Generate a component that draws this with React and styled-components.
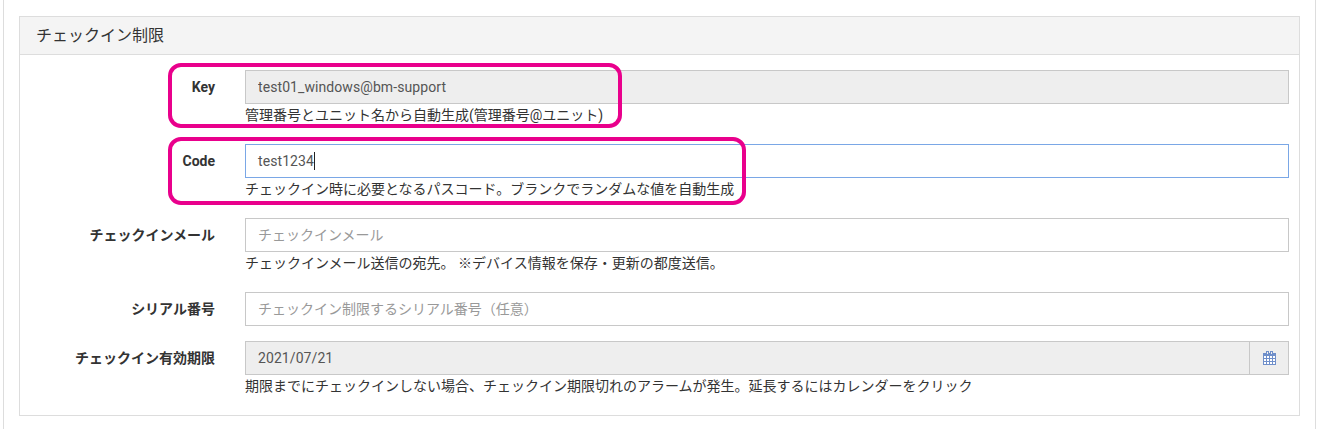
import React from "react";
import styled, { createGlobalStyle } from "styled-components";

const GlobalStyle = createGlobalStyle`
  html, body {
    margin: 0;
    padding: 0;
    background: #fff;
  }
  body {
    font-family: Roboto, "Noto Sans CJK JP", sans-serif;
    font-size: 14px;
    color: #333;
  }
`;

const Page = styled.div`
  position: relative;
  box-sizing: border-box;
  width: 1313px;
  height: 429px;
  margin-left: 3px;
  padding: 16px 15px 0 15px;
  border-left: 1px solid #ddd;
  border-right: 1px solid #ddd;
  overflow: hidden;
`;

const Panel = styled.section`
  box-sizing: border-box;
  height: 400px;
  border: 1px solid #ddd;
`;

const PanelHeading = styled.h3`
  box-sizing: border-box;
  height: 38px;
  margin: 0;
  padding: 0 16px;
  background: #f4f4f4;
  border-bottom: 1px solid #ddd;
  font-size: 16px;
  font-weight: 400;
  line-height: 38px;
  color: #333;
`;

const PanelBody = styled.div`
  padding: 15px 10px 0 0;
`;

const FormRow = styled.div`
  display: grid;
  grid-template-columns: 195px 1fr;
  column-gap: 30px;
  margin-bottom: 15px;
`;

const Label = styled.label`
  padding-top: 7px;
  font-weight: 700;
  line-height: 20px;
  text-align: right;
  color: #333;
`;

const InputGroup = styled.div`
  display: flex;
`;

const Input = styled.input`
  display: block;
  box-sizing: border-box;
  flex: 1;
  width: 100%;
  min-width: 0;
  height: 34px;
  padding: 6px 12px;
  border: 1px solid ${(p) => (p.$focused ? "#7aa7e6" : "#c8c8c8")};
  background: ${(p) => (p.disabled ? "#eee" : "#fff")};
  font-family: inherit;
  font-size: 14px;
  letter-spacing: 0.08px;
  line-height: 20px;
  color: #555;
  opacity: 1;
  outline: none;

  &::placeholder {
    color: #999;
    letter-spacing: 0;
    opacity: 1;
  }
`;

const Caret = styled.span`
  display: inline-block;
  width: 1px;
  height: 18px;
  background: #222;
  vertical-align: -4px;
`;

const CalendarAddon = styled.span`
  display: flex;
  align-items: center;
  justify-content: center;
  box-sizing: border-box;
  width: 39px;
  height: 34px;
  border: 1px solid #c8c8c8;
  border-left: 0;
  background: #eee;
  color: #6f8fca;
`;

const HelpText = styled.p`
  margin: 1px 0 4px;
  line-height: 20px;
  color: #333;
`;

const Callout = styled.div`
  position: absolute;
  box-sizing: border-box;
  left: ${(p) => p.$left}px;
  top: ${(p) => p.$top}px;
  width: ${(p) => p.$width}px;
  height: ${(p) => p.$height}px;
  border: 4px solid #e9008c;
  border-radius: 13px;
  pointer-events: none;
`;

function CalendarIcon() {
  return (
    <svg width="13" height="14" viewBox="0 0 13 14" aria-hidden="true">
      <rect x="1" y="5" width="11" height="8" fill="#fff" />
      <path
        fill="currentColor"
        fillRule="evenodd"
        d="M3 0h3v2h1V0h3v2h3v12H0V2h3V0zM4 1v2h1V1H4zm4 0v2h1V1H8zM1 5v2h2V5H1zm3 0v2h2V5H4zm3 0v2h2V5H7zm3 0v2h2V5h-2zM1 8v2h2V8H1zm3 0v2h2V8H4zm3 0v2h2V8H7zm3 0v2h2V8h-2zM1 11v2h2v-2H1zm3 0v2h2v-2H4zm3 0v2h2v-2H7zm3 0v2h2v-2h-2z"
      />
      <path fill="#eee" d="M4 1h1v1.5H4zM8 1h1v1.5H8z" />
    </svg>
  );
}

export default function App() {
  return (
    <>
      <GlobalStyle />
      <Page>
        <Panel>
          <PanelHeading>チェックイン制限</PanelHeading>
          <PanelBody>
            <FormRow>
              <Label>Key</Label>
              <div>
                <Input disabled value="test01_windows@bm-support" readOnly />
                <HelpText>管理番号とユニット名から自動生成(管理番号@ユニット)</HelpText>
              </div>
            </FormRow>
            <FormRow>
              <Label>Code</Label>
              <div>
                <Input as="div" $focused>
                  test1234
                  <Caret />
                </Input>
                <HelpText>チェックイン時に必要となるパスコード。ブランクでランダムな値を自動生成</HelpText>
              </div>
            </FormRow>
            <FormRow>
              <Label>チェックインメール</Label>
              <div>
                <Input placeholder="チェックインメール" />
                <HelpText>チェックインメール送信の宛先。 ※デバイス情報を保存・更新の都度送信。</HelpText>
              </div>
            </FormRow>
            <FormRow>
              <Label>シリアル番号</Label>
              <div>
                <Input placeholder="チェックイン制限するシリアル番号（任意）" />
              </div>
            </FormRow>
            <FormRow>
              <Label>チェックイン有効期限</Label>
              <div>
                <InputGroup>
                  <Input disabled value="2021/07/21" readOnly />
                  <CalendarAddon>
                    <CalendarIcon />
                  </CalendarAddon>
                </InputGroup>
                <HelpText>期限までにチェックインしない場合、チェックイン期限切れのアラームが発生。延長するにはカレンダーをクリック</HelpText>
              </div>
            </FormRow>
          </PanelBody>
        </Panel>
        <Callout $left={164} $top={63} $width={454} $height={65} />
        <Callout $left={164} $top={137} $width={578} $height={68} />
      </Page>
    </>
  );
}
